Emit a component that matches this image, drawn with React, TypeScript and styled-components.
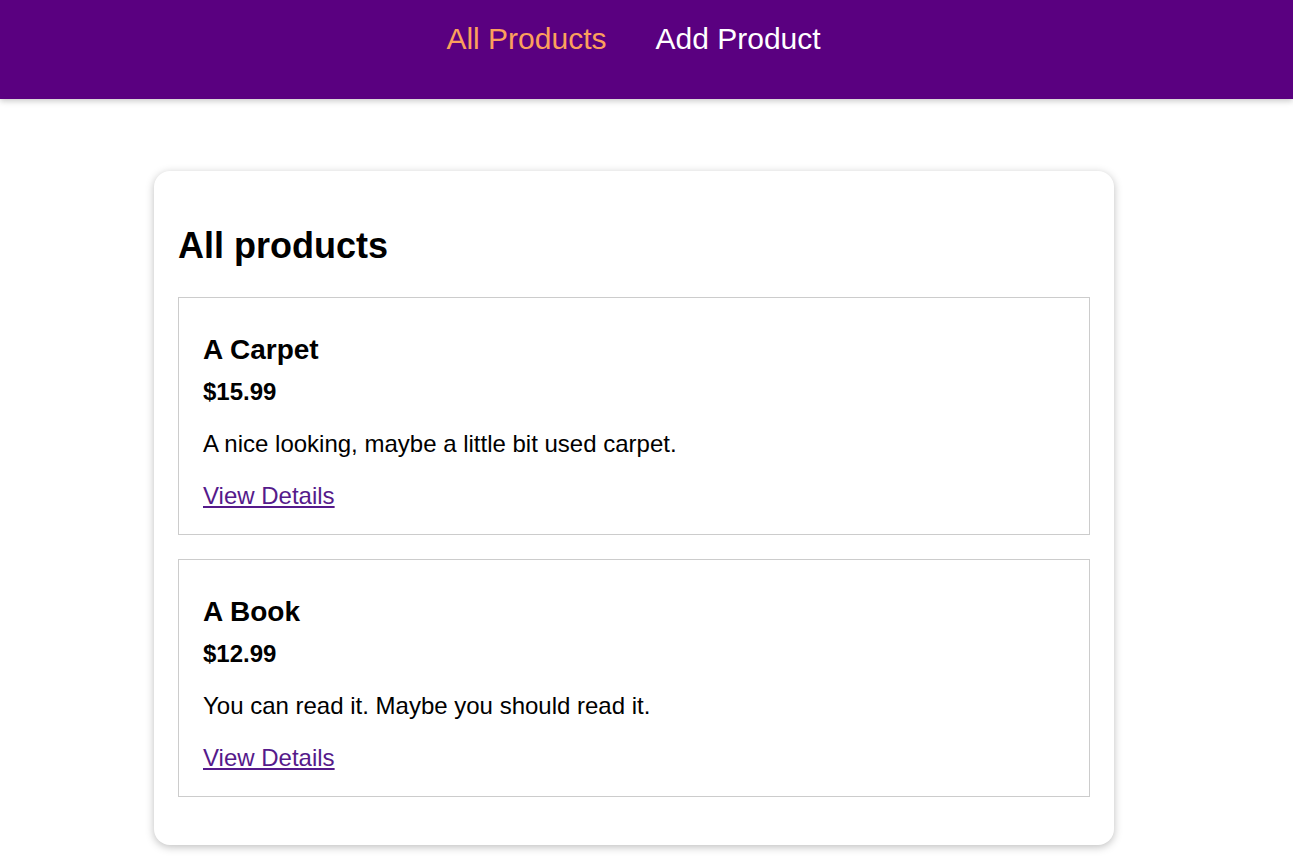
import React from "react";
import styled, { createGlobalStyle } from "styled-components";

const GlobalStyle = createGlobalStyle`
  html, body {
    margin: 0;
    padding: 0;
    background: #ffffff;
    font-family: "Liberation Sans", Arial, Helvetica, sans-serif;
    color: #000000;
  }
  * { box-sizing: border-box; }
`;

const Header = styled.header`
  height: 99px;
  background: #5a0080;
  box-shadow: 0 2px 6px rgba(0, 0, 0, 0.22);
  display: flex;
  justify-content: center;
  align-items: flex-start;
  padding: 22px 26px 0 0;
`;

const Nav = styled.nav`
  display: flex;
  gap: 49px;
`;

const NavLink = styled.a<{ $active?: boolean }>`
  font-size: 30px;
  line-height: 34.5px;
  text-decoration: none;
  color: ${(p) => (p.$active ? "#fca05c" : "#ffffff")};
  cursor: pointer;
`;

const Main = styled.main`
  padding: 72px 25px 40px 0;
`;

const Card = styled.section`
  width: 960px;
  margin: 0 auto;
  background: #ffffff;
  border-radius: 16px;
  box-shadow: 0 2px 8px rgba(0, 0, 0, 0.26);
  padding: 24px;
  overflow: hidden;
`;

const Title = styled.h1`
  font-size: 36px;
  font-weight: 700;
  line-height: 41.4px;
  margin: 30px 0 31px 0;
`;

const List = styled.ul`
  list-style: none;
  margin: 0;
  padding: 0;
`;

const Item = styled.li`
  border: 1px solid #cccccc;
  padding: 24px 24px 25px 24px;
  margin-bottom: 24px;
`;

const Name = styled.h2`
  font-size: 28px;
  font-weight: 700;
  line-height: 32.2px;
  margin: 12px 0 11px 0;
`;

const Price = styled.h3`
  font-size: 24px;
  font-weight: 700;
  line-height: 27.6px;
  margin: 0 0 25px 0;
`;

const Description = styled.p`
  font-size: 24px;
  line-height: 27.6px;
  margin: 0 0 24px 0;
`;

const DetailsLink = styled.a`
  display: inline-block;
  font-size: 24px;
  line-height: 27.6px;
  color: #551a8b;
  text-decoration: underline;
  cursor: pointer;
`;

const products = [
  {
    id: "p1",
    title: "A Carpet",
    price: "$15.99",
    description: "A nice looking, maybe a little bit used carpet.",
  },
  {
    id: "p2",
    title: "A Book",
    price: "$12.99",
    description: "You can read it. Maybe you should read it.",
  },
];

export default function App() {
  return (
    <>
      <GlobalStyle />
      <Header>
        <Nav>
          <NavLink $active>All Products</NavLink>
          <NavLink>Add Product</NavLink>
        </Nav>
      </Header>
      <Main>
        <Card>
          <Title>All products</Title>
          <List>
            {products.map((p) => (
              <Item key={p.id}>
                <Name>{p.title}</Name>
                <Price>{p.price}</Price>
                <Description>{p.description}</Description>
                <DetailsLink>View Details</DetailsLink>
              </Item>
            ))}
          </List>
        </Card>
      </Main>
    </>
  );
}
